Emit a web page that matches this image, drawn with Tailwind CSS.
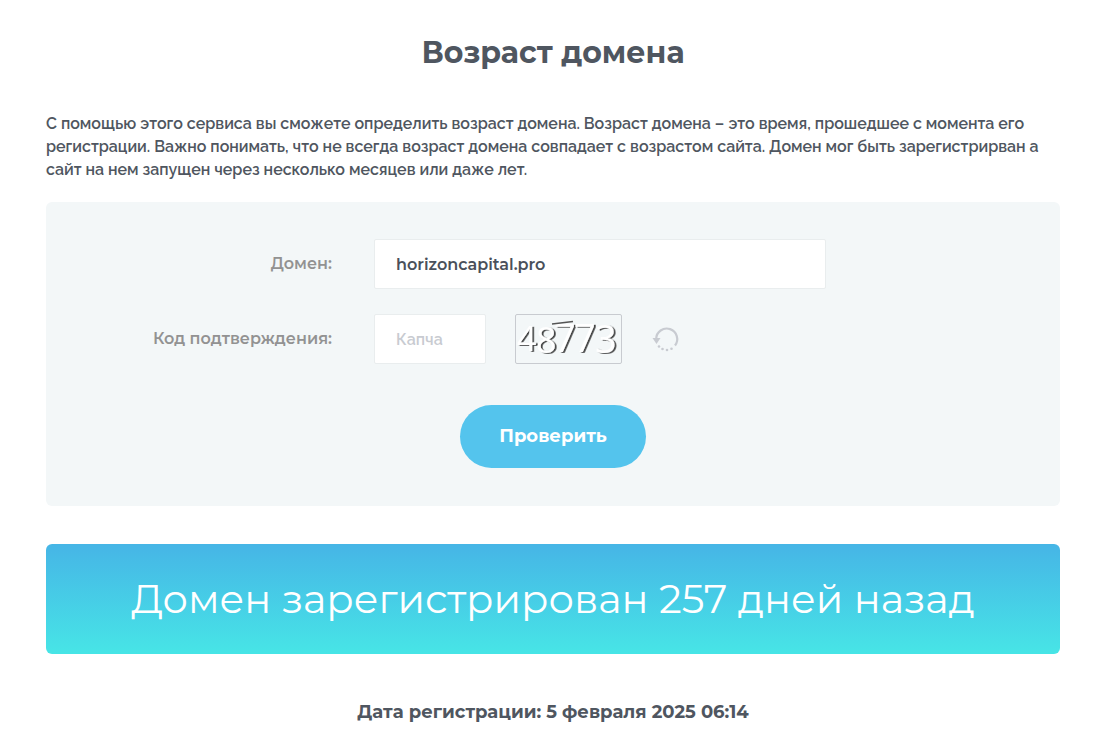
<!DOCTYPE html>
<html lang="ru">
<head>
    <meta charset="UTF-8">
    <meta name="viewport" content="width=device-width, initial-scale=1.0">
    <title>Возраст домена</title>
    <script src="https://cdn.jsdelivr.net/npm/@tailwindcss/browser@4"></script>
</head>
<body class="bg-white font-['Montserrat',Inter,sans-serif] text-[#4f5660]">
    <main class="pl-[46px] pr-11 pt-[33px] pb-5">
        <h1 class="text-center text-[30px] leading-10 font-bold">Возраст домена</h1>

        <p class="mt-[39px] font-['Raleway',Inter,sans-serif] text-[16px] leading-[23px] font-semibold">
            С помощью этого сервиса вы сможете определить возраст домена. Возраст домена – это время, прошедшее с момента его<br>
            регистрации. Важно понимать, что не всегда возраст домена совпадает с возрастом сайта. Домен мог быть зарегистрирван а<br>
            сайт на нем запущен через несколько месяцев или даже лет.
        </p>

        <!-- Check form -->
        <form class="mt-[21px] rounded-md bg-[#f3f7f8] pt-[37px] pb-[38px]">
            <div class="flex items-center">
                <label for="domain" class="w-[286px] shrink-0 text-right text-[16px] font-semibold text-[#929292]">Домен:</label>
                <input id="domain" type="text" value="horizoncapital.pro" class="ml-[42px] h-[50px] w-[452px] rounded-xs border border-[#e9edee] bg-white px-[21px] text-[16px] font-semibold text-[#4a505a] outline-none">
            </div>

            <div class="mt-[25px] flex items-center">
                <label for="captcha" class="w-[286px] shrink-0 text-right text-[16px] font-semibold text-[#929292]">Код подтверждения:</label>
                <input id="captcha" type="text" placeholder="Капча" class="ml-[42px] h-[50px] w-28 rounded-xs border border-[#e9edee] bg-white px-[21px] font-['Raleway',Inter,sans-serif] text-[16px] font-semibold outline-none placeholder:text-[#c8cbd1]">

                <svg class="ml-[29px] h-[50px] w-[107px] overflow-visible rounded-xs border border-[#c8cbd0]" viewBox="0 0 105 48" role="img" aria-label="48773" font-family="Open Sans, sans-serif">
                    <defs>
                        <filter id="emboss" x="-10%" y="-10%" width="130%" height="130%">
                            <feDropShadow dx="1.800" dy="0.8" stdDeviation="0.7" flood-color="#222" flood-opacity="0.85"/>
                        </filter>
                    </defs>
                    <g fill="#fff" filter="url(#emboss)">
                        <text x="1" y="36" font-size="34">4</text>
                        <text x="20" y="38" font-size="36">8</text>
                        <text x="38" y="37" font-size="38">7</text>
                        <text x="58" y="37" font-size="38">7</text>
                        <text x="79" y="38" font-size="38">3</text>
                    </g>
                    <path d="M36 9L57 6.500" fill="none" stroke="#555" stroke-width="1.500"/>
                </svg>

                <button type="button" aria-label="Обновить код" class="ml-[30px] cursor-pointer text-[#c8cbd1]">
                    <svg class="h-7 w-7" viewBox="0 0 28 28" fill="none" stroke="currentColor" stroke-width="2.200">
                        <path d="M4.200 14A10.500 10.500 0 1 1 23 20.500"/>
                        <path d="M0.500 13H8.500L4.500 19Z" fill="currentColor" stroke="none"/>
                        <g fill="currentColor" stroke="none">
                            <circle cx="7" cy="21.500" r="1.300"/>
                            <circle cx="10.500" cy="24" r="1.300"/>
                            <circle cx="15" cy="25" r="1.300"/>
                            <circle cx="19.500" cy="23.800" r="1.300"/>
                        </g>
                    </svg>
                </button>
            </div>

            <div class="mt-[41px] text-center">
                <button type="submit" class="h-[63px] w-[186px] cursor-pointer rounded-full bg-[#54c4ed] text-[18px] font-bold text-white">Проверить</button>
            </div>
        </form>

        <!-- Result -->
        <div class="mt-[38px] rounded-md bg-linear-to-b from-[#46b5e6] to-[#47e5e6] py-[30px] text-center text-[40px] leading-[50px] text-white">
            Домен зарегистрирован 257 дней назад
        </div>

        <p class="mt-11 text-center text-[18px] leading-7 font-bold">Дата регистрации: 5 февраля 2025 06:14</p>
    </main>
</body>
</html>
